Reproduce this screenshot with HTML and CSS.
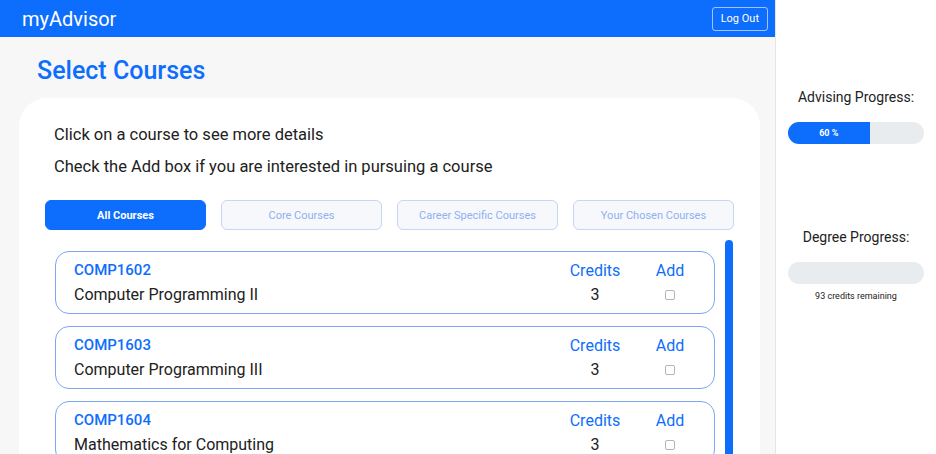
FILE: index.html
```html
<!DOCTYPE html>
<html>
<head>
<meta charset="utf-8">
<link rel="stylesheet" href="styles.css">
</head>
<body>
<div class="app">
  <div class="main">
    <nav class="navbar">
      <span class="brand">myAdvisor</span>
      <button class="logout">Log Out</button>
    </nav>
    <div class="content">
      <h1 class="title">Select Courses</h1>
      <div class="card">
        <p class="info">Click on a course to see more details</p>
        <p class="info">Check the Add box if you are interested in pursuing a course</p>
        <div class="tabs">
          <button class="tab active">All Courses</button>
          <button class="tab">Core Courses</button>
          <button class="tab">Career Specific Courses</button>
          <button class="tab">Your Chosen Courses</button>
        </div>
        <div class="listwrap">
          <div class="list">
            <div class="course">
              <div class="code">COMP1602</div>
              <div class="head">Credits</div>
              <div class="head">Add</div>
              <div class="name">Computer Programming II</div>
              <div class="num">3</div>
              <div class="chk"><span class="box"></span></div>
            </div>
            <div class="course">
              <div class="code">COMP1603</div>
              <div class="head">Credits</div>
              <div class="head">Add</div>
              <div class="name">Computer Programming III</div>
              <div class="num">3</div>
              <div class="chk"><span class="box"></span></div>
            </div>
            <div class="course">
              <div class="code">COMP1604</div>
              <div class="head">Credits</div>
              <div class="head">Add</div>
              <div class="name">Mathematics for Computing</div>
              <div class="num">3</div>
              <div class="chk"><span class="box"></span></div>
            </div>
          </div>
          <div class="scrollbar"></div>
        </div>
      </div>
    </div>
  </div>
  <aside class="sidebar">
    <div class="label">Advising Progress:</div>
    <div class="bar"><div class="fill" style="width:60%">60 %</div></div>
    <div class="label second">Degree Progress:</div>
    <div class="bar"></div>
    <div class="remaining">93 credits remaining</div>
  </aside>
</div>
</body>
</html>
```
FILE: styles.css
```css
* { box-sizing: border-box; }
html, body { margin: 0; padding: 0; height: 100%; overflow: hidden; }
body { font-family: Roboto, "Liberation Sans", sans-serif; color: #212121; background: #fff; }
.app { display: flex; height: 454px; overflow: hidden; }
.main { width: 776px; flex-shrink: 0; background: #f7f7f7; border-right: 1px solid #e6e6e6; display: flex; flex-direction: column; overflow: hidden; }
.navbar { flex-shrink: 0; height: 37px; background: #0d6efd; display: flex; align-items: center; justify-content: space-between; padding: 0 7px 0 22px; }
.brand { color: #fff; font-size: 20px; }
.logout { background: transparent; color: #fff; border: 1px solid rgba(255,255,255,0.6); border-radius: 3px; font-family: inherit; font-size: 11px; height: 24px; padding: 0 8px; }
.content { flex-shrink: 0; padding: 0 15px 0 19px; }
.title { margin: 19px 0 0 18px; font-size: 25px; font-weight: 500; color: #0d6efd; line-height: 30px; }
.card { margin-top: 12px; background: #fff; border-radius: 28px 28px 0 0; padding: 27px 0 0 26px; height: 400px; }
.info { margin: 0 0 12px 9px; font-size: 16.5px; line-height: 20px; color: #212121; }
.tabs { display: flex; gap: 15px; margin-top: 23px; }
.tab { width: 161px; height: 30px; border-radius: 6px; border: 1px solid #c6d6f6; background: #f6f8fb; color: #8fb0f2; font-family: inherit; font-size: 11px; }
.tab.active { background: #0d6efd; border-color: #0d6efd; color: #fff; font-weight: 700; }
.listwrap { display: flex; margin-top: 10px; gap: 10px; }
.list { display: flex; flex-direction: column; gap: 12px; padding: 11px 0 0 10px; }
.course { width: 660px; height: 63px; flex-shrink: 0; border: 1px solid #7ea6f2; border-radius: 14px; display: grid; grid-template-columns: 1fr 90px 60px; grid-template-rows: 24px 24px; padding: 6px 14px 0 18px; align-items: center; }
.code { color: #0d6efd; font-size: 15px; font-weight: 500; }
.head { color: #0d6efd; font-size: 16px; text-align: center; }
.name { font-size: 16px; color: #212121; }
.num { text-align: center; font-size: 16px; }
.chk { display: flex; justify-content: center; }
.box { width: 10px; height: 10px; border: 1px solid #b5b5b5; border-radius: 2px; background: #fff; margin-top: 2px; }
.scrollbar { width: 8px; height: 300px; background: #0d6efd; border-radius: 4px 4px 0 0; }
.sidebar { width: 160px; padding: 88px 12px 0 12px; text-align: center; }
.label { font-size: 14px; line-height: 18px; color: #222; margin-bottom: 16px; }
.label.second { margin-top: 84px; }
.bar { height: 22px; border-radius: 11px; background: #e9ecef; overflow: hidden; }
.fill { height: 100%; background: #0d6efd; color: #fff; font-size: 9px; font-weight: 700; line-height: 22px; text-align: center; }
.remaining { font-size: 9px; margin-top: 7px; color: #222; }
```
